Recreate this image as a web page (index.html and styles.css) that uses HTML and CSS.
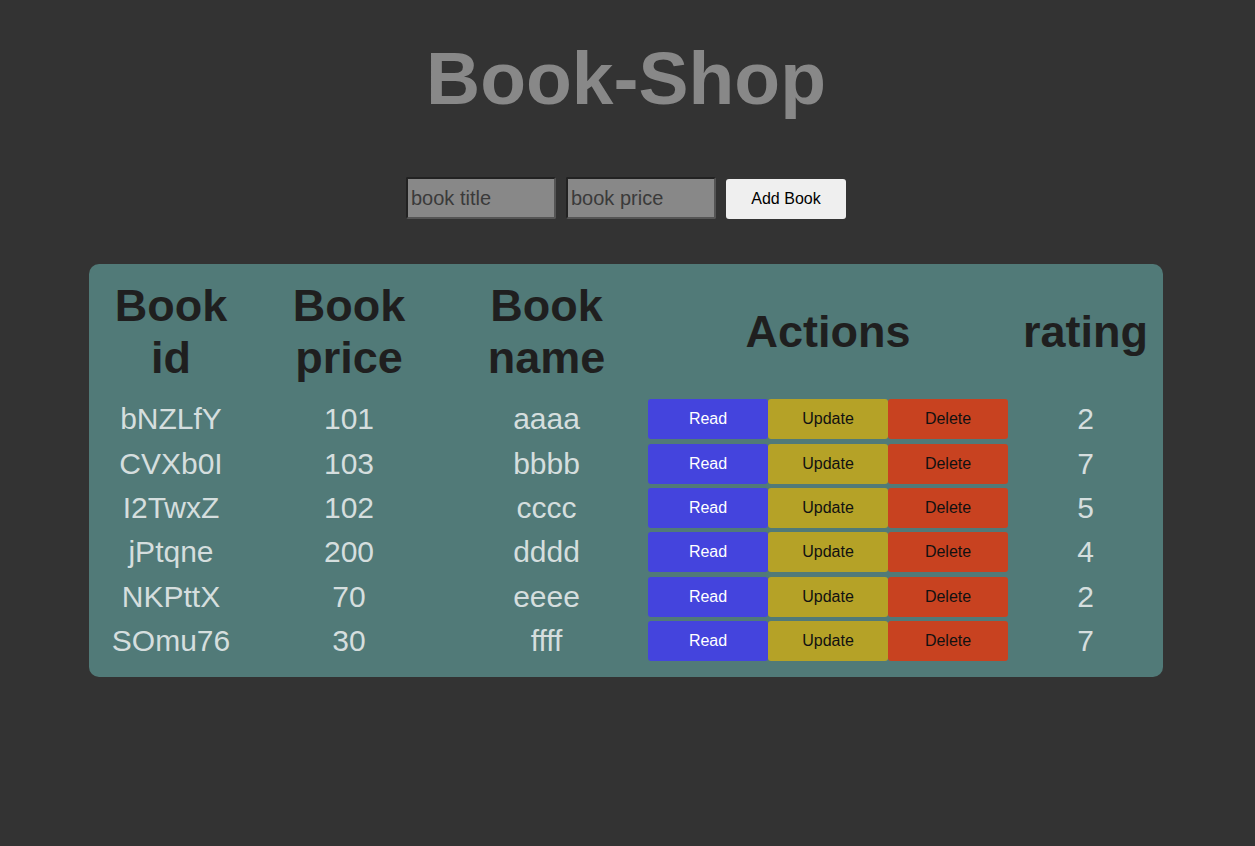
FILE: index.html
```html
<!DOCTYPE html>
<html>
<head>
<meta charset="utf-8">
<title>Book-Shop</title>
<link rel="stylesheet" href="styles.css">
</head>
<body>
<h1 class="title">Book-Shop</h1>
<form class="add-form">
  <input class="field" type="text" placeholder="book title">
  <input class="field" type="text" placeholder="book price">
  <button class="add-btn" type="button">Add Book</button>
</form>
<table class="books">
  <colgroup>
    <col class="c-id"><col class="c-price"><col class="c-name"><col class="c-actions"><col class="c-rating">
  </colgroup>
  <thead>
    <tr><th>Book id</th><th>Book price</th><th>Book name</th><th>Actions</th><th>rating</th></tr>
  </thead>
  <tbody>
    <tr><td>bNZLfY</td><td>101</td><td>aaaa</td><td class="actions"><button class="act read">Read</button><button class="act update">Update</button><button class="act delete">Delete</button></td><td>2</td></tr>
    <tr><td>CVXb0I</td><td>103</td><td>bbbb</td><td class="actions"><button class="act read">Read</button><button class="act update">Update</button><button class="act delete">Delete</button></td><td>7</td></tr>
    <tr><td>I2TwxZ</td><td>102</td><td>cccc</td><td class="actions"><button class="act read">Read</button><button class="act update">Update</button><button class="act delete">Delete</button></td><td>5</td></tr>
    <tr><td>jPtqne</td><td>200</td><td>dddd</td><td class="actions"><button class="act read">Read</button><button class="act update">Update</button><button class="act delete">Delete</button></td><td>4</td></tr>
    <tr><td>NKPttX</td><td>70</td><td>eeee</td><td class="actions"><button class="act read">Read</button><button class="act update">Update</button><button class="act delete">Delete</button></td><td>2</td></tr>
    <tr><td>SOmu76</td><td>30</td><td>ffff</td><td class="actions"><button class="act read">Read</button><button class="act update">Update</button><button class="act delete">Delete</button></td><td>7</td></tr>
  </tbody>
</table>
</body>
</html>
```
FILE: styles.css
```css
html, body {
  margin: 0;
  padding: 0;
  background: #333333;
  font-family: "Liberation Sans", Arial, sans-serif;
}
body {
  padding-right: 3px;
}
.title {
  margin: 35px 0 0;
  text-align: center;
  font-size: 75px;
  font-weight: bold;
  color: #888888;
  line-height: normal;
}
.add-form {
  display: flex;
  justify-content: center;
  align-items: center;
  gap: 10px;
  margin-top: 56px;
}
.field {
  box-sizing: border-box;
  width: 150px;
  height: 42px;
  margin: 0;
  padding: 0 3px;
  background: #888888;
  border: 2px solid #222222;
  border-right-color: #555;
  border-bottom-color: #555;
  border-radius: 2px;
  font-family: "Liberation Sans", Arial, sans-serif;
  font-size: 20px;
  color: #222;
}
.field::placeholder {
  color: #3a3a3a;
  opacity: 1;
}
.add-btn {
  box-sizing: border-box;
  width: 120px;
  height: 40px;
  margin: 1px 0 0;
  background: #efefef;
  border: none;
  border-radius: 3px;
  font-family: "Liberation Sans", Arial, sans-serif;
  font-size: 16px;
  color: #000;
}
.books {
  box-sizing: border-box;
  width: 1074px;
  margin: 45px auto 0;
  table-layout: fixed;
  border-collapse: separate;
  border-spacing: 0;
  background: #517a78;
  border-radius: 10px;
  padding: 0 0 14px;
}
.c-id { width: 164px; }
.c-price { width: 192px; }
.c-name { width: 203px; }
.c-actions { width: 360px; }
.c-rating { width: 155px; }
.books th {
  padding: 16px 4px 13px;
  font-size: 45px;
  font-weight: bold;
  color: #1f1f1f;
  text-align: center;
  vertical-align: middle;
  line-height: normal;
}
.books td {
  padding: 2.2px 0;
  font-size: 30px;
  color: #d5dede;
  text-align: center;
  vertical-align: middle;
  line-height: 40px;
}
.books td.actions {
  font-size: 0;
  line-height: 0;
  white-space: nowrap;
}
.act {
  box-sizing: border-box;
  display: inline-block;
  vertical-align: middle;
  width: 120px;
  height: 40px;
  margin: 0;
  border: none;
  border-radius: 3px;
  font-family: "Liberation Sans", Arial, sans-serif;
  font-size: 16px;
  line-height: normal;
}
.read { background: #4444dd; color: #ffffff; }
.update { background: #b5a227; color: #111111; }
.delete { background: #c84220; color: #111111; }
```
